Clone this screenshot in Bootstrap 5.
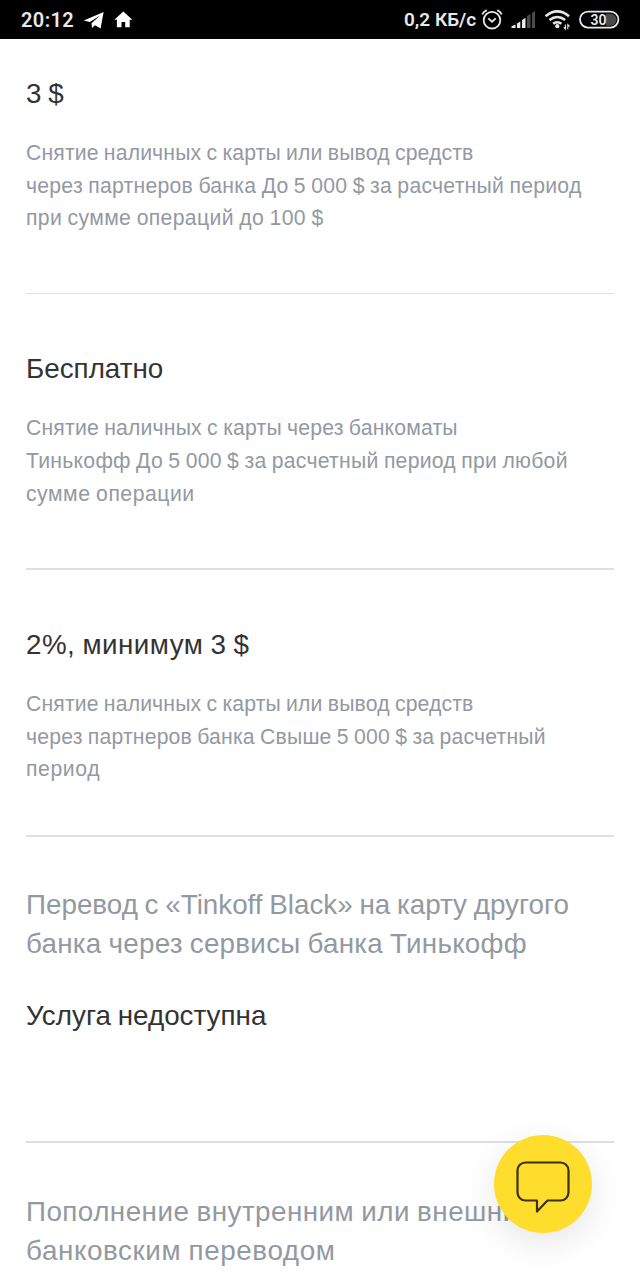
<!DOCTYPE html>
<html lang="ru">
<head>
    <meta charset="UTF-8">
    <meta name="viewport" content="width=device-width, initial-scale=1">
    <title>Тарифы</title>
    <link rel="stylesheet" href="https://cdn.jsdelivr.net/npm/bootstrap@5.3.0/dist/css/bootstrap.min.css">
    <style>
        body { font-family: "Liberation Sans", Arial, sans-serif; height: 1280px; overflow: hidden; color: #333; background: #fff; }

        .status-bar { height: 39px; padding: 0 20px 0 21px; background: #000; color: #e8e8e8; font-family: Roboto, sans-serif; font-weight: 600; line-height: 40px; }
        .clock { font-size: 20px; letter-spacing: .4px; width: 62px; }
        .speed { font-size: 19px; width: 77px; white-space: nowrap; }

        .tariffs { padding: 0 26px; }
        .tariff { border-bottom: 2px solid #dedfe0; padding: 54.8px 0 57.6px; }
        .tariff-first { padding: 34.7px 0 57.8px; border-bottom-width: 1px; }
        .tariff-third { padding: 55.2px 0 48.4px; }
        .tariff-transfer { padding: 48.5px 0 105.7px; }
        .tariff-topup { padding: 49.2px 0 0; border: 0; }

        .tariff-name, .tariff-value { font-size: 27.8px; line-height: 39.2px; font-weight: 400; margin: 0; white-space: nowrap; word-spacing: -1px; }
        .tariff-name { color: #9299a2; margin-bottom: 32.2px; }
        .tariff-note { color: #9299a2; font-size: 21.2px; line-height: 32.7px; margin: 24.2px 0 0; white-space: nowrap; word-spacing: -.8px; }
        .tariff-third .tariff-note { margin-top: 23.8px; }

        .ls-1 { letter-spacing: .02px; }
        .ls-2 { letter-spacing: .14px; }
        .ls-3 { letter-spacing: .18px; }
        .ls-4 { letter-spacing: .25px; }
        .ls-5 { letter-spacing: .35px; }
        .ls-6 { letter-spacing: .46px; }
        .ls-7 { letter-spacing: .52px; }
        .ls-8 { letter-spacing: .6px; }

        .chat-btn { right: 48px; bottom: 47px; width: 98px; height: 98px; background: #ffdd2d; border: 0; box-shadow: 0 10px 34px rgba(0, 0, 0, .1); }
    </style>
</head>
<body>
    <!-- Строка состояния -->
    <header class="status-bar d-flex align-items-center">
        <span class="clock">20:12</span>
        <svg width="50" height="39" viewBox="83 0 50 39" fill="#fff">
            <path d="M83.8 20.6 103.6 12l-3 16.6-5.6-3.3-3 2.6-.5-4.6 8.6-7.7-10.3 6.4z"/>
            <path d="M123.3 11.4l-9 8.3h2.6v7.5h4.6v-5.3h3.7v5.3h4.5v-7.5h2.7z"/>
        </svg>
        <span class="speed ms-auto">0,2 КБ/с</span>
        <svg width="139" height="39" viewBox="481 0 139 39" fill="none" stroke="#e8e8e8">
            <!-- будильник -->
            <circle cx="492" cy="20.2" r="8.3" stroke-width="1.8"/>
            <path d="M488.3 18.3l3.7 3.4 3.8-3.4" stroke-width="1.8"/>
            <path d="M482.2 14.4q1.5-3 4.6-4.3M501.8 14.4q-1.5-3-4.6-4.3" stroke-width="1.9"/>
            <!-- сеть -->
            <g stroke="none">
                <path d="M511.5 28v-1.8l4-1.8V28zM517 23.4l3.3-1.8V28H517zM522 19.9l3.5-2.2V28H522z" fill="#e8e8e8"/>
                <path d="M527 16l3.5-2.2V28H527zM532 13l3-2.2V28h-3z" fill="#4b4b4b"/>
            </g>
            <!-- wi-fi -->
            <path d="M545.6 16.2q11.7-9.6 23.4 0M549.5 20.1q7.8-6.2 15.6 0M553.2 23.8q4.1-3.1 8.2 0" stroke-width="2.6"/>
            <circle cx="557.3" cy="26.2" r="2.1" fill="#e8e8e8" stroke="none"/>
            <path d="M565.4 24.5v4.5l-1.6-1.8M567.8 29.3v-4.6l1.7 1.8" stroke-width="1.1"/>
            <!-- батарея -->
            <path d="M606 13.7h4.5a6 6 0 0 1 0 12H606z" fill="#4a4a4a" stroke="none"/>
            <rect x="580" y="11.6" width="38.4" height="16" rx="8" stroke-width="1.8"/>
            <text x="598.5" y="24.7" fill="#e8e8e8" stroke="none" text-anchor="middle" font-family="Roboto, sans-serif" font-size="14" font-weight="600">30</text>
        </svg>
    </header>

    <!-- Тарифы -->
    <main class="tariffs">
        <section class="tariff tariff-first">
            <h2 class="tariff-value">3 $</h2>
            <p class="tariff-note">
                <span class="d-block ls-2">Снятие наличных с карты или вывод средств</span>
                <span class="d-block ls-4">через партнеров банка До 5 000 $ за расчетный период</span>
                <span class="d-block ls-5">при сумме операций до 100 $</span>
            </p>
        </section>
        <section class="tariff">
            <h2 class="tariff-value">Бесплатно</h2>
            <p class="tariff-note">
                <span class="d-block ls-3">Снятие наличных с карты через банкоматы</span>
                <span class="d-block ls-4">Тинькофф До 5 000 $ за расчетный период при любой</span>
                <span class="d-block ls-7">сумме операции</span>
            </p>
        </section>
        <section class="tariff tariff-third">
            <h2 class="tariff-value ls-6">2%, минимум 3 $</h2>
            <p class="tariff-note">
                <span class="d-block ls-2">Снятие наличных с карты или вывод средств</span>
                <span class="d-block ls-3">через партнеров банка Свыше 5 000 $ за расчетный</span>
                <span class="d-block ls-8">период</span>
            </p>
        </section>
        <section class="tariff tariff-transfer">
            <h2 class="tariff-name">
                <span class="d-block">Перевод с «Tinkoff Black» на карту другого</span>
                <span class="d-block ls-4">банка через сервисы банка Тинькофф</span>
            </h2>
            <p class="tariff-value ls-1">Услуга недоступна</p>
        </section>
        <section class="tariff tariff-topup">
            <h2 class="tariff-name">
                <span class="d-block ls-6">Пополнение внутренним или внешним</span>
                <span class="d-block ls-8">банковским переводом</span>
            </h2>
        </section>
    </main>

    <!-- Чат -->
    <button type="button" class="chat-btn position-fixed rounded-circle p-0 d-flex align-items-center justify-content-center" aria-label="Чат">
        <svg width="98" height="98" viewBox="494 1134.5 98 98" fill="none" stroke="#3a3118" stroke-width="2.2" stroke-linejoin="round">
            <path d="M525.5 1162h35a8 8 0 0 1 8 8v22a8 8 0 0 1-8 8H547.5L537 1211v-11H525.5a8 8 0 0 1-8-8v-22a8 8 0 0 1 8-8z"/>
        </svg>
    </button>

    <script src="https://cdn.jsdelivr.net/npm/bootstrap@5.3.0/dist/js/bootstrap.bundle.min.js"></script>
</body>
</html>
